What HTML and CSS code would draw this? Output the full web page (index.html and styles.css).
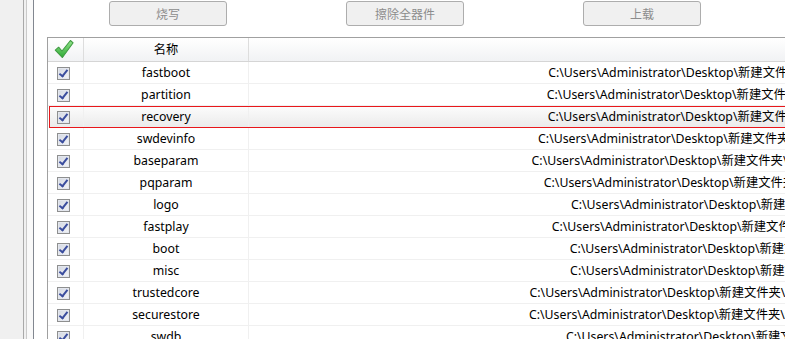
FILE: index.html
```html
<!DOCTYPE html>
<html lang="zh-CN">
<head>
    <meta charset="UTF-8">
    <title>烧写</title>
    <link rel="stylesheet" href="styles.css">
</head>
<body>
    <div class="window">
        <div class="side"></div>
        <div class="gutter"></div>
        <div class="main">
            <div class="toolbar">
                <button type="button" class="tool-btn" disabled>烧写</button>
                <button type="button" class="tool-btn" disabled>擦除全器件</button>
                <button type="button" class="tool-btn" disabled>上载</button>
            </div>
            <div class="table">
                <div class="row head">
                    <div class="cell col-check">
                        <svg class="all-check" width="20" height="20" viewBox="0 0 19 19">
                            <defs>
                                <linearGradient id="g" x1="0" y1="0" x2="0" y2="1">
                                    <stop offset="0" stop-color="#92e48c"/>
                                    <stop offset="1" stop-color="#2faa35"/>
                                </linearGradient>
                            </defs>
                            <path d="M1.2 10.6 L4.4 7.8 L7.6 11.4 L15.6 1.4 L18.2 3.6 L8 17.6 Z" fill="url(#g)" stroke="#3f9a41" stroke-width="1" stroke-linejoin="round"/>
                        </svg>
                    </div>
                    <div class="cell col-name">名称</div>
                    <div class="cell col-path"></div>
                </div>
                <div class="row"><div class="cell col-check"><span class="cb"></span></div><div class="cell col-name">fastboot</div><div class="cell col-path">C:\Users\Administrator\Desktop\新建文件夹\fastboot.img</div></div>
                <div class="row"><div class="cell col-check"><span class="cb"></span></div><div class="cell col-name">partition</div><div class="cell col-path">C:\Users\Administrator\Desktop\新建文件夹\partition.img</div></div>
                <div class="row selected"><div class="cell col-check"><span class="cb"></span></div><div class="cell col-name">recovery</div><div class="cell col-path">C:\Users\Administrator\Desktop\新建文件夹\recovery.img</div></div>
                <div class="row"><div class="cell col-check"><span class="cb"></span></div><div class="cell col-name">swdevinfo</div><div class="cell col-path">C:\Users\Administrator\Desktop\新建文件夹\swdevinfo.img</div></div>
                <div class="row"><div class="cell col-check"><span class="cb"></span></div><div class="cell col-name">baseparam</div><div class="cell col-path">C:\Users\Administrator\Desktop\新建文件夹\baseparam.img</div></div>
                <div class="row"><div class="cell col-check"><span class="cb"></span></div><div class="cell col-name">pqparam</div><div class="cell col-path">C:\Users\Administrator\Desktop\新建文件夹\pqparam.img</div></div>
                <div class="row"><div class="cell col-check"><span class="cb"></span></div><div class="cell col-name">logo</div><div class="cell col-path">C:\Users\Administrator\Desktop\新建文件夹\logo.img</div></div>
                <div class="row"><div class="cell col-check"><span class="cb"></span></div><div class="cell col-name">fastplay</div><div class="cell col-path">C:\Users\Administrator\Desktop\新建文件夹\fastplay.img</div></div>
                <div class="row"><div class="cell col-check"><span class="cb"></span></div><div class="cell col-name">boot</div><div class="cell col-path">C:\Users\Administrator\Desktop\新建文件夹\boot.img</div></div>
                <div class="row"><div class="cell col-check"><span class="cb"></span></div><div class="cell col-name">misc</div><div class="cell col-path">C:\Users\Administrator\Desktop\新建文件夹\misc.img</div></div>
                <div class="row"><div class="cell col-check"><span class="cb"></span></div><div class="cell col-name">trustedcore</div><div class="cell col-path">C:\Users\Administrator\Desktop\新建文件夹\trustedcore.img</div></div>
                <div class="row"><div class="cell col-check"><span class="cb"></span></div><div class="cell col-name">securestore</div><div class="cell col-path">C:\Users\Administrator\Desktop\新建文件夹\securestore.img</div></div>
                <div class="row"><div class="cell col-check"><span class="cb"></span></div><div class="cell col-name">swdb</div><div class="cell col-path">C:\Users\Administrator\Desktop\新建文件夹\swdb.img</div></div>
            </div>
        </div>
    </div>
</body>
</html>
```

FILE: styles.css
```css
body {
    margin: 0;
    font-family: "Noto Sans", "Noto Sans CJK SC", sans-serif;
    font-size: 12.3px;
    color: #000;
    background: #fff;
    overflow: hidden;
}

.window {
    display: flex;
    height: 339px;
    width: 785px;
    overflow: hidden;
    background: #f0f0f0;
}

.side {
    width: 23px;
    flex: none;
    border-right: 1px solid #a9a9a9;
}

.gutter {
    width: 6px;
    flex: none;
    margin-left: 2px;
    border-left: 1px solid #cacaca;
    border-right: 1px solid #828790;
    background: #f9f9f9;
}

.main {
    flex: none;
    width: 1000px;
    background: #fff;
}

.toolbar {
    display: flex;
    gap: 119px;
    height: 37px;
    padding: 1px 0 0 75px;
    box-sizing: border-box;
}

.tool-btn {
    width: 118px;
    height: 25px;
    border: 1px solid #adadad;
    border-radius: 3px;
    background: #f0f0f0;
    color: #8c8c8c;
    font-family: inherit;
    font-size: 12px;
    padding: 0;
}

.table {
    margin-left: 13px;
    border-top: 1px solid #a0a0a0;
    border-left: 1px solid #a0a0a0;
}

.row {
    display: flex;
    height: 22px;
    line-height: 22px;
    border-bottom: 1px solid #f0f0f0;
    box-sizing: border-box;
    white-space: nowrap;
}

.row.head {
    height: 24px;
    line-height: 23px;
    border-bottom: 1px solid #d5d5d5;
    background: linear-gradient(#ffffff, #f1f2f4);
}

.row.selected {
    border: 1px solid #e8171b;
    margin-left: 1px;
    line-height: 20px;
    background: linear-gradient(#fbfbfb, #ebebeb);
}

.cell {
    flex: none;
    box-sizing: border-box;
    border-right: 1px solid #f0f0f0;
    text-align: center;
}

.head .cell {
    border-right-color: #dddddd;
}

.col-check {
    width: 36px;
    display: flex;
    align-items: center;
    padding-left: 9px;
}

.selected .col-check {
    width: 34px;
    padding-left: 7px;
}

.head .col-check {
    padding-left: 6px;
}

.col-name {
    width: 165px;
}

.col-path {
    width: 656px;
    text-align: right;
    padding-right: 26px;
}

.all-check {
    margin-top: -1px;
}

.cb {
    position: relative;
    width: 13px;
    height: 13px;
    box-sizing: border-box;
    border: 1px solid #8e8f8f;
    background: linear-gradient(135deg, #d3d8e2, #f3f4f7);
    box-shadow: inset 0 0 0 1px #e4e7ee;
    margin-top: 1px;
}

.cb::after {
    content: "";
    position: absolute;
    left: 3px;
    top: 0;
    width: 3px;
    height: 7px;
    border-right: 2px solid #3a4d9e;
    border-bottom: 2px solid #3a4d9e;
    transform: rotate(38deg);
}
```
